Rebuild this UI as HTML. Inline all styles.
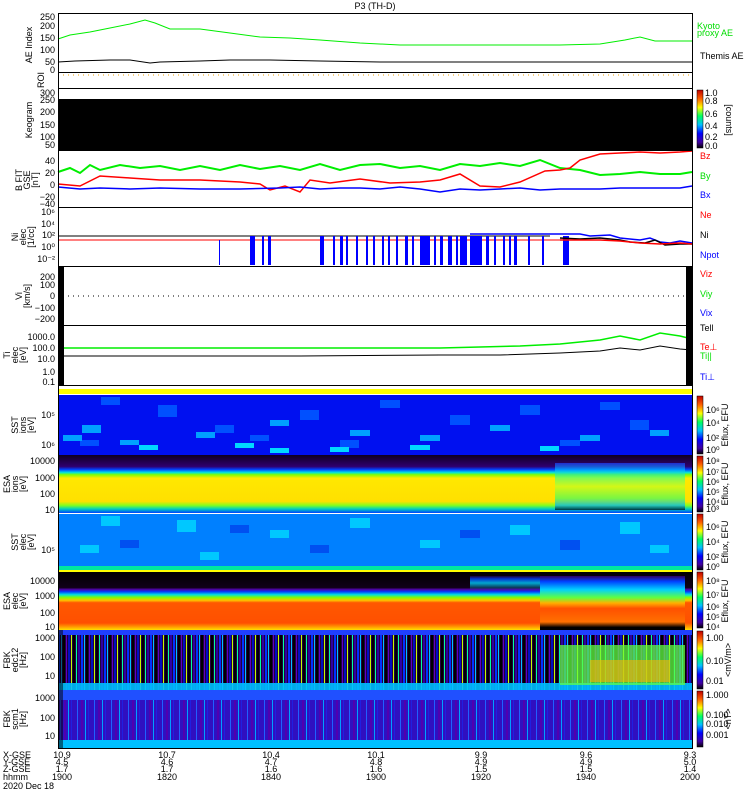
<!DOCTYPE html>
<html><head><meta charset="utf-8"><style>
html,body{margin:0;padding:0;background:#fff;}
svg{display:block;font-family:"Liberation Sans",sans-serif;}
text{font-size:9px;}
</style></head><body>
<svg width="750" height="800" viewBox="0 0 750 800" xmlns="http://www.w3.org/2000/svg">
<defs>
<linearGradient id="cb" x1="0" y1="1" x2="0" y2="0">
<stop offset="0" stop-color="#000"/><stop offset="0.1" stop-color="#4000a0"/><stop offset="0.25" stop-color="#0000ff"/><stop offset="0.4" stop-color="#00c0ff"/><stop offset="0.55" stop-color="#00ff60"/><stop offset="0.7" stop-color="#ffff00"/><stop offset="0.85" stop-color="#ff6000"/><stop offset="1" stop-color="#c00000"/>
</linearGradient>
<linearGradient id="esai" x1="0" y1="0" x2="0" y2="1">
<stop offset="0" stop-color="#100020"/><stop offset="0.2" stop-color="#300070"/><stop offset="0.25" stop-color="#0040ff"/><stop offset="0.3" stop-color="#00e0e0"/><stop offset="0.34" stop-color="#80ff00"/><stop offset="0.4" stop-color="#ffe800"/><stop offset="0.8" stop-color="#ffe000"/><stop offset="0.87" stop-color="#80ff20"/><stop offset="0.93" stop-color="#00d0c0"/><stop offset="1" stop-color="#0040ff"/>
</linearGradient>
<linearGradient id="esai2" x1="0" y1="0" x2="0" y2="1">
<stop offset="0" stop-color="#2040ff"/><stop offset="0.15" stop-color="#00c0ff"/><stop offset="0.3" stop-color="#40ff80"/><stop offset="0.5" stop-color="#c0ff20"/><stop offset="0.75" stop-color="#40ff60"/><stop offset="0.9" stop-color="#00b0ff"/><stop offset="1" stop-color="#000"/>
</linearGradient>
<linearGradient id="esae" x1="0" y1="0" x2="0" y2="1">
<stop offset="0" stop-color="#000"/><stop offset="0.27" stop-color="#100018"/><stop offset="0.3" stop-color="#5000a0"/><stop offset="0.34" stop-color="#0040ff"/><stop offset="0.39" stop-color="#00e0e0"/><stop offset="0.44" stop-color="#80ff00"/><stop offset="0.49" stop-color="#ffc000"/><stop offset="0.53" stop-color="#ff5800"/><stop offset="0.88" stop-color="#ff5000"/><stop offset="0.95" stop-color="#ffa000"/><stop offset="1" stop-color="#ffe000"/>
</linearGradient>
<linearGradient id="esae2" x1="0" y1="0" x2="0" y2="1">
<stop offset="0" stop-color="#300060"/><stop offset="0.1" stop-color="#0040ff"/><stop offset="0.25" stop-color="#00d0ff"/><stop offset="0.4" stop-color="#60ff40"/><stop offset="0.5" stop-color="#ffb000"/><stop offset="0.6" stop-color="#ff5000"/><stop offset="0.85" stop-color="#ff7000"/><stop offset="0.95" stop-color="#000"/><stop offset="1" stop-color="#000"/>
</linearGradient>
<linearGradient id="esae3" x1="0" y1="0" x2="0" y2="1">
<stop offset="0" stop-color="#200040"/><stop offset="0.2" stop-color="#0040ff"/><stop offset="0.5" stop-color="#00d0ff"/><stop offset="1" stop-color="#00d0ff" stop-opacity="0"/>
</linearGradient>
<pattern id="fbk1" width="23" height="60" patternUnits="userSpaceOnUse" x="58" y="630">
<rect width="23" height="60" fill="#200040"/>
<rect x="0" width="2" height="60" fill="#0030ff"/><rect x="3" width="1" height="60" fill="#00c0ff"/><rect x="5" width="2" height="60" fill="#000"/><rect x="8" width="1" height="60" fill="#6000c0"/><rect x="10" width="2" height="60" fill="#0010c0"/><rect x="13" width="1" height="60" fill="#c0ff00"/><rect x="15" width="2" height="60" fill="#000"/><rect x="18" width="1" height="60" fill="#00ffa0"/><rect x="20" width="2" height="60" fill="#3000a0"/>
</pattern>
<pattern id="fbk2" width="17" height="60" patternUnits="userSpaceOnUse" x="58" y="690">
<rect width="17" height="60" fill="#3010c0"/>
<rect x="2" width="1" height="60" fill="#2060ff"/><rect x="6" width="2" height="60" fill="#5000b0"/><rect x="10" width="1" height="60" fill="#00a0ff"/><rect x="13" width="1" height="60" fill="#2020e0"/>
</pattern>
</defs>

<text x="375" y="9" text-anchor="middle" font-size="10">P3 (TH-D)</text>

<polyline fill="none" stroke="#00ee00" stroke-width="1" points="58,39 70,35 90,32 110,28 130,24 145,20 155,23 170,29 200,29 230,33 260,37 290,38 320,40 360,43 400,45 440,45 480,45 520,45 560,45 600,44 625,40 640,37 655,41 692,41"/>
<polyline fill="none" stroke="#000" stroke-width="1" points="58,62 75,61 110,60 130,60 150,63 160,62 200,61 230,60 270,60 320,61 380,62 440,62 500,62 560,62 650,62 692,62"/>
<line x1="58" y1="75" x2="692" y2="75" stroke="#f0a000" stroke-dasharray="1,4"/>
<rect x="58" y="99" width="634" height="51" fill="#000"/>
<polyline fill="none" stroke="#00ee00" points="58,172 70,168 80,173 90,165 100,170 120,165 140,168 160,166 180,170 200,166 220,170 240,165 260,169 280,166 300,170 320,164 340,170 360,165 380,164 400,168 420,166 440,170 460,164 480,166 500,163 520,166 540,160 560,168 580,170 600,175 620,174 640,172 660,174 680,174 692,172" stroke-width="2"/>
<polyline fill="none" stroke="#ff0000" stroke-width="1.5" points="58,184 80,186 100,176 130,178 160,180 200,180 240,182 260,184 270,190 285,186 300,192 310,180 330,183 360,179 390,183 420,182 440,180 460,174 480,186 500,187 520,182 545,171 560,170 570,168 580,160 600,154 620,153 640,152 660,153 680,152 692,151"/>
<polyline fill="none" stroke="#0000ff" stroke-width="1.5" points="58,187 80,189 100,188 130,189 160,188 200,189 240,189 280,188 300,187 320,189 340,188 360,188 380,189 400,187 420,189 440,192 460,189 480,190 500,189 520,188 540,190 560,189 580,189 600,189 620,188 640,188 660,188 680,188 692,186"/>
<line x1="58" y1="236" x2="550" y2="236" stroke="#000"/>
<line x1="58" y1="240" x2="560" y2="240" stroke="#ff0000"/>
<g fill="#0000ff">
<rect x="219" y="240" width="1" height="25"/><rect x="250" y="236" width="5" height="29"/><rect x="262" y="236" width="2" height="29"/><rect x="268" y="236" width="3" height="29"/>
<rect x="320" y="236" width="4" height="29"/><rect x="333" y="236" width="2" height="29"/><rect x="340" y="236" width="3" height="29"/><rect x="346" y="236" width="2" height="29"/><rect x="356" y="236" width="2" height="29"/>
<rect x="366" y="236" width="2" height="29"/><rect x="373" y="236" width="2" height="29"/><rect x="382" y="236" width="2" height="29"/><rect x="388" y="236" width="2" height="29"/><rect x="396" y="236" width="2" height="29"/>
<rect x="405" y="236" width="3" height="29"/><rect x="412" y="236" width="2" height="29"/><rect x="420" y="236" width="10" height="29"/><rect x="434" y="236" width="2" height="29"/><rect x="440" y="236" width="3" height="29"/>
<rect x="448" y="236" width="4" height="29"/><rect x="456" y="236" width="2" height="29"/><rect x="460" y="236" width="7" height="29"/><rect x="470" y="236" width="12" height="29"/><rect x="486" y="236" width="3" height="29"/>
<rect x="494" y="236" width="2" height="29"/><rect x="503" y="236" width="2" height="29"/><rect x="509" y="236" width="2" height="29"/><rect x="514" y="236" width="3" height="29"/><rect x="528" y="236" width="2" height="29"/><rect x="542" y="236" width="2" height="29"/><rect x="563" y="236" width="6" height="29"/>
</g>
<polyline fill="none" stroke="#0000ff" stroke-width="1.5" points="470,234 560,234 580,234 590,236 610,235 620,238 640,240 650,238 660,242 670,243 680,241 692,243"/>
<polyline fill="none" stroke="#000" stroke-width="1.5" points="560,238 580,239 600,238 620,240 630,242 645,243 655,240 665,245 680,244 692,244"/>
<polyline fill="none" stroke="#ff0000" stroke-width="1.5" points="560,240 600,240 620,241 640,243 660,244 680,243 692,244"/>
<line x1="58" y1="296" x2="692" y2="296" stroke="#000" stroke-dasharray="1,4"/>
<polyline fill="none" stroke="#00ee00" stroke-width="1.5" points="58,348 300,348 440,348 480,347 520,346 560,344 600,340 620,336 640,340 660,333 680,336 692,339"/>
<polyline fill="none" stroke="#000" points="58,356 300,356 440,355 500,355 560,353 600,351 620,348 640,350 660,346 680,349 692,350"/>
<rect x="58" y="389" width="634" height="5" fill="#ffff00"/>
<rect x="58" y="395" width="634" height="60" fill="#0010f0"/>
<g fill="#0050ff">
<rect x="101" y="397" width="19" height="8"/><rect x="158" y="405" width="19" height="12"/><rect x="215" y="425" width="19" height="8"/><rect x="300" y="410" width="19" height="10"/><rect x="380" y="400" width="20" height="8"/><rect x="450" y="415" width="20" height="10"/><rect x="520" y="405" width="20" height="10"/><rect x="600" y="402" width="20" height="8"/><rect x="630" y="420" width="19" height="10"/><rect x="80" y="440" width="19" height="6"/><rect x="250" y="435" width="19" height="6"/><rect x="340" y="440" width="19" height="8"/><rect x="560" y="440" width="20" height="6"/>
</g>
<g fill="#00a0ff">
<rect x="63" y="435" width="19" height="6"/><rect x="82" y="425" width="19" height="8"/><rect x="120" y="440" width="19" height="5"/><rect x="196" y="432" width="19" height="6"/><rect x="270" y="420" width="19" height="6"/><rect x="350" y="430" width="20" height="6"/><rect x="420" y="435" width="20" height="6"/><rect x="490" y="425" width="20" height="6"/><rect x="580" y="435" width="20" height="6"/><rect x="650" y="430" width="19" height="6"/>
</g>
<g fill="#00d8ff">
<rect x="139" y="445" width="19" height="5"/><rect x="235" y="443" width="19" height="5"/><rect x="330" y="447" width="19" height="5"/><rect x="410" y="445" width="20" height="5"/><rect x="540" y="446" width="19" height="5"/><rect x="270" y="448" width="19" height="5"/>
</g>
<rect x="58" y="455" width="634" height="58" fill="url(#esai)"/>
<rect x="555" y="463" width="130" height="47" fill="url(#esai2)" opacity="0.7"/>
<rect x="58" y="514" width="634" height="57" fill="#0080ff"/>
<g fill="#00c8ff">
<rect x="101" y="516" width="19" height="10"/><rect x="177" y="520" width="19" height="12"/><rect x="270" y="530" width="19" height="8"/><rect x="350" y="518" width="20" height="10"/><rect x="420" y="540" width="20" height="8"/><rect x="510" y="525" width="20" height="10"/><rect x="620" y="522" width="20" height="12"/><rect x="650" y="545" width="19" height="8"/><rect x="80" y="545" width="19" height="8"/><rect x="200" y="552" width="19" height="8"/>
</g>
<g fill="#0050f0">
<rect x="120" y="540" width="19" height="8"/><rect x="230" y="525" width="19" height="8"/><rect x="310" y="545" width="19" height="8"/><rect x="460" y="530" width="20" height="8"/><rect x="560" y="540" width="20" height="10"/>
</g>
<rect x="58" y="566" width="634" height="4" fill="#00e8a0"/>
<rect x="58" y="570" width="634" height="2" fill="#ffff00"/>
<rect x="58" y="572" width="634" height="58" fill="url(#esae)"/>
<rect x="470" y="576" width="70" height="14" fill="url(#esae3)" opacity="0.8"/>
<rect x="540" y="576" width="145" height="54" fill="url(#esae2)"/>
<rect x="58" y="630" width="634" height="60" fill="url(#fbk1)"/>
<rect x="58" y="630" width="634" height="5" fill="#2040ff"/>
<rect x="58" y="683" width="634" height="7" fill="#00c0ff" opacity="0.9"/>
<rect x="560" y="645" width="125" height="40" fill="#60ff40" opacity="0.75"/>
<rect x="590" y="660" width="80" height="22" fill="#ffb000" opacity="0.6"/>
<rect x="58" y="690" width="634" height="58" fill="url(#fbk2)"/>
<rect x="58" y="690" width="634" height="10" fill="#2050ff"/>
<rect x="58" y="740" width="634" height="8" fill="#00c0ff"/>

<g stroke="#000" fill="none">
<rect x="58.5" y="13.5" width="634" height="735"/>
<line x1="58" y1="72.5" x2="692" y2="72.5"/><line x1="58" y1="88.5" x2="692" y2="88.5"/><line x1="58" y1="150.5" x2="692" y2="150.5"/><line x1="58" y1="207.5" x2="692" y2="207.5"/><line x1="58" y1="266.5" x2="692" y2="266.5"/><line x1="58" y1="325.5" x2="692" y2="325.5"/><line x1="58" y1="385.5" x2="692" y2="385.5"/>
</g>
<rect x="58" y="266" width="6" height="120" fill="#000"/>
<rect x="58" y="630" width="5" height="118" fill="#000" opacity="0.5"/>
<rect x="686" y="266" width="6" height="120" fill="#000"/>
<g stroke="#000" stroke-width="0.5">
<rect x="697" y="90" width="6" height="58" fill="url(#cb)"/>
<rect x="697" y="396" width="6" height="58" fill="url(#cb)"/>
<rect x="697" y="456" width="6" height="56" fill="url(#cb)"/>
<rect x="697" y="514" width="6" height="56" fill="url(#cb)"/>
<rect x="697" y="572" width="6" height="56" fill="url(#cb)"/>
<rect x="697" y="631" width="6" height="58" fill="url(#cb)"/>
<rect x="697" y="691" width="6" height="56" fill="url(#cb)"/>
</g>

<g text-anchor="end" font-size="9">
<text x="55" y="20">250</text><text x="55" y="29">200</text><text x="55" y="41">150</text><text x="55" y="53">100</text><text x="55" y="65">50</text><text x="55" y="73">0</text>
<text x="55" y="96">300</text><text x="55" y="103">250</text><text x="55" y="115">200</text><text x="55" y="128">150</text><text x="55" y="140">100</text><text x="55" y="148">50</text>
<text x="55" y="164">40</text><text x="55" y="176">20</text><text x="55" y="188">0</text><text x="55" y="200">−20</text><text x="55" y="207">−40</text>
<text x="55" y="215">10⁶</text><text x="55" y="227">10⁴</text><text x="55" y="238">10²</text><text x="55" y="250">10⁰</text><text x="55" y="262">10⁻²</text>
<text x="55" y="280">200</text><text x="55" y="288">100</text><text x="55" y="299">0</text><text x="55" y="311">−100</text><text x="55" y="322">−200</text>
<text x="55" y="340">1000.0</text><text x="55" y="351">100.0</text><text x="55" y="362">10.0</text><text x="55" y="375">1.0</text><text x="55" y="385">0.1</text>
<text x="55" y="418">10⁵</text><text x="55" y="448">10⁶</text>
<text x="55" y="464">10000</text><text x="55" y="481">1000</text><text x="55" y="497">100</text><text x="55" y="513">10</text>
<text x="55" y="553">10⁵</text>
<text x="55" y="584">10000</text><text x="55" y="599">1000</text><text x="55" y="616">100</text><text x="55" y="630">10</text>
<text x="55" y="641">1000</text><text x="55" y="660">100</text><text x="55" y="679">10</text>
<text x="55" y="701">1000</text><text x="55" y="721">100</text><text x="55" y="739">10</text>
</g>
<g font-size="9" text-anchor="middle">
<text transform="translate(32,45) rotate(-90)">AE Index</text>
<text transform="translate(44,80) rotate(-90)">ROI</text>
<text transform="translate(32,120) rotate(-90)">Keogram</text>
<text transform="translate(22,180) rotate(-90)">B FIT</text><text transform="translate(30,180) rotate(-90)">GSE</text><text transform="translate(38,180) rotate(-90)">[nT]</text>
<text transform="translate(18,237) rotate(-90)">Ni</text><text transform="translate(26,237) rotate(-90)">elec</text><text transform="translate(34,237) rotate(-90)">[1/cc]</text>
<text transform="translate(22,296) rotate(-90)">Vi</text><text transform="translate(30,296) rotate(-90)">[km/s]</text>
<text transform="translate(10,355) rotate(-90)">Ti</text><text transform="translate(18,355) rotate(-90)">elec</text><text transform="translate(26,355) rotate(-90)">[eV]</text>
<text transform="translate(18,425) rotate(-90)">SST</text><text transform="translate(26,425) rotate(-90)">ions</text><text transform="translate(34,425) rotate(-90)">[eV]</text>
<text transform="translate(10,484) rotate(-90)">ESA</text><text transform="translate(18,484) rotate(-90)">ions</text><text transform="translate(26,484) rotate(-90)">[eV]</text>
<text transform="translate(18,542) rotate(-90)">SST</text><text transform="translate(26,542) rotate(-90)">elec</text><text transform="translate(34,542) rotate(-90)">[eV]</text>
<text transform="translate(10,601) rotate(-90)">ESA</text><text transform="translate(18,601) rotate(-90)">elec</text><text transform="translate(26,601) rotate(-90)">[eV]</text>
<text transform="translate(10,660) rotate(-90)">FBK</text><text transform="translate(18,660) rotate(-90)">edc12</text><text transform="translate(26,660) rotate(-90)">[Hz]</text>
<text transform="translate(10,719) rotate(-90)">FBK</text><text transform="translate(18,719) rotate(-90)">scm1</text><text transform="translate(26,719) rotate(-90)">[Hz]</text>
</g>
<g font-size="9">
<text x="697" y="29" fill="#00dd00">Kyoto</text><text x="697" y="36" fill="#00dd00">proxy AE</text>
<text x="700" y="59">Themis AE</text>
<text x="705" y="96">1.0</text><text x="705" y="104">0.8</text><text x="705" y="117">0.6</text><text x="705" y="129">0.4</text><text x="705" y="140">0.2</text><text x="705" y="149">0.0</text>
<text transform="translate(726,120) rotate(90)" text-anchor="middle" font-size="8">[counts]</text>
<text x="700" y="159" fill="#ff0000">Bz</text><text x="700" y="179" fill="#00dd00">By</text><text x="700" y="198" fill="#0000ff">Bx</text>
<text x="700" y="218" fill="#ff0000">Ne</text><text x="700" y="238">Ni</text><text x="700" y="258" fill="#0000ff">Npot</text>
<text x="700" y="277" fill="#ff0000">Viz</text><text x="700" y="297" fill="#00dd00">Viy</text><text x="700" y="316" fill="#0000ff">Vix</text>
<text x="700" y="331">Tell</text><text x="700" y="350" fill="#ff0000">Te⊥</text><text x="700" y="359" fill="#00dd00">Ti||</text><text x="700" y="380" fill="#0000ff">Ti⊥</text>
</g>
<g font-size="8">
<text x="706" y="413">10⁶</text><text x="706" y="426">10⁴</text><text x="706" y="441">10²</text><text x="706" y="453">10⁰</text>
<text transform="translate(728,425) rotate(-90)" text-anchor="middle">Eflux, EFU</text>
<text x="706" y="464">10⁸</text><text x="706" y="475">10⁷</text><text x="706" y="485">10⁶</text><text x="706" y="495">10⁵</text><text x="706" y="505">10⁴</text><text x="706" y="512">10³</text>
<text transform="translate(728,484) rotate(-90)" text-anchor="middle">Eflux, EFU</text>
<text x="706" y="530">10⁶</text><text x="706" y="545">10⁴</text><text x="706" y="560">10²</text><text x="706" y="570">10⁰</text>
<text transform="translate(728,542) rotate(-90)" text-anchor="middle">Eflux, EFU</text>
<text x="706" y="584">10⁸</text><text x="706" y="598">10⁷</text><text x="706" y="610">10⁶</text><text x="706" y="620">10⁵</text><text x="706" y="630">10⁴</text>
<text transform="translate(728,601) rotate(-90)" text-anchor="middle">Eflux, EFU</text>
<text x="706" y="641">1.00</text><text x="706" y="664">0.10</text><text x="706" y="684">0.01</text>
<text transform="translate(731,660) rotate(-90)" text-anchor="middle">&lt;mV/m&gt;</text>
<text x="706" y="698">1.000</text><text x="706" y="718">0.100</text><text x="706" y="727">0.010</text><text x="706" y="738">0.001</text>
<text transform="translate(731,719) rotate(-90)" text-anchor="middle">&lt;nT&gt;</text>
</g>
<g font-size="9">
<text x="3" y="758">X-GSE</text><text x="3" y="765">Y-GSE</text><text x="3" y="772">Z-GSE</text><text x="3" y="780">hhmm</text><text x="3" y="789">2020 Dec 18</text>
</g>
<g font-size="9" text-anchor="middle">
<text x="62" y="758">10.9</text><text x="62" y="765">4.5</text><text x="62" y="772">1.7</text><text x="62" y="780">1900</text>
<text x="167" y="758">10.7</text><text x="167" y="765">4.6</text><text x="167" y="772">1.7</text><text x="167" y="780">1820</text>
<text x="271" y="758">10.4</text><text x="271" y="765">4.7</text><text x="271" y="772">1.6</text><text x="271" y="780">1840</text>
<text x="376" y="758">10.1</text><text x="376" y="765">4.8</text><text x="376" y="772">1.6</text><text x="376" y="780">1900</text>
<text x="481" y="758">9.9</text><text x="481" y="765">4.9</text><text x="481" y="772">1.5</text><text x="481" y="780">1920</text>
<text x="586" y="758">9.6</text><text x="586" y="765">4.9</text><text x="586" y="772">1.5</text><text x="586" y="780">1940</text>
<text x="690" y="758">9.3</text><text x="690" y="765">5.0</text><text x="690" y="772">1.4</text><text x="690" y="780">2000</text>
</g>
</svg>
</body></html>
